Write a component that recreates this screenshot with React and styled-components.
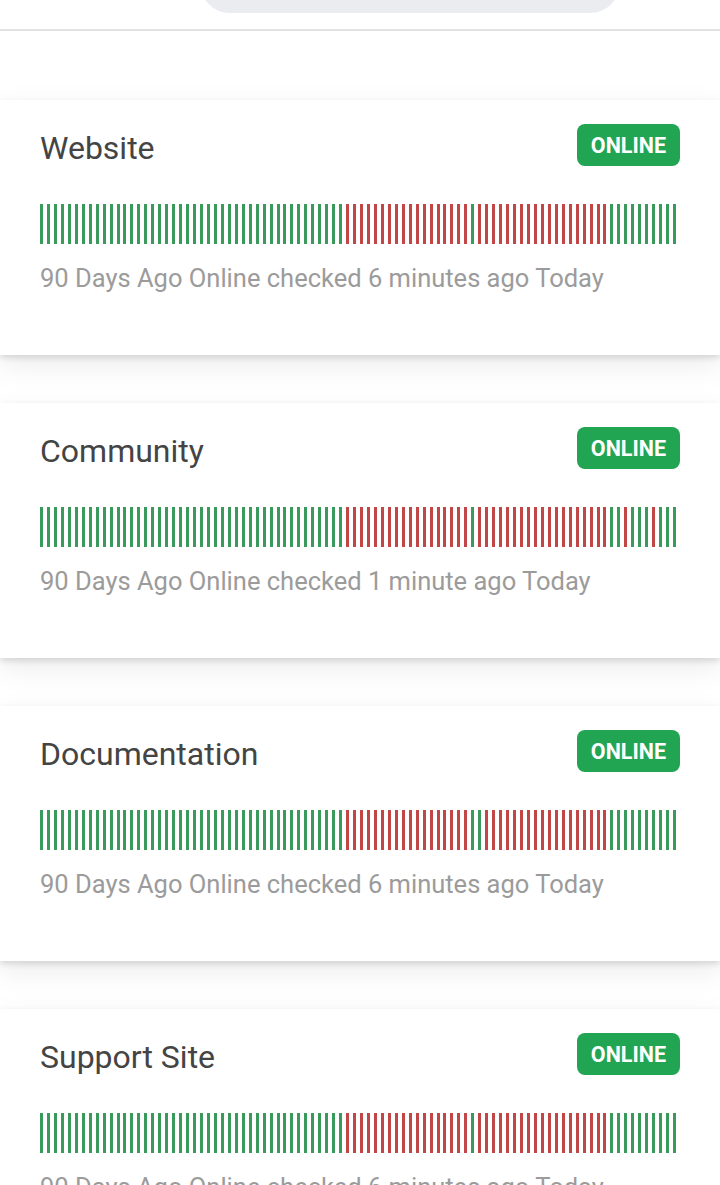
import styled, { createGlobalStyle } from "styled-components";

const GlobalStyle = createGlobalStyle`
  html, body {
    margin: 0;
    padding: 0;
    background: #ffffff;
    font-family: Roboto, "Liberation Sans", Arial, sans-serif;
  }
`;

const Header = styled.header`
  height: 29px;
  display: flex;
  justify-content: center;
  overflow: hidden;
  background: #fff;
  border-bottom: 2px solid #e2e2e2;
`;

const SearchPill = styled.div`
  width: 420px;
  height: 60px;
  margin-top: -47px;
  margin-left: 100px;
  border-radius: 30px;
  background: #ebecf0;
`;

const List = styled.main`
  display: flex;
  flex-direction: column;
  gap: 48px;
  padding: 69px 0 40px;
`;

const Card = styled.section`
  background: #fff;
  padding: 24px 40px 62px;
  box-shadow: 0 3px 6px rgba(0, 0, 0, 0.12), 0 10px 28px rgba(0, 0, 0, 0.08);
`;

const TopRow = styled.div`
  display: flex;
  align-items: center;
  justify-content: space-between;
  height: 42px;
`;

const Name = styled.h2`
  margin: 0;
  padding-top: 6px;
  font-size: 32px;
  line-height: 36px;
  font-weight: 400;
  color: #444;
`;

const Badge = styled.span`
  height: 42px;
  padding: 0 14px;
  display: flex;
  align-items: center;
  border-radius: 8px;
  background: #22a553;
  color: #fff;
  font-size: 21.5px;
  font-weight: 700;
`;

const Bars = styled.div`
  display: grid;
  grid-template-columns: repeat(92, 1fr);
  height: 40px;
  margin-top: 38px;
`;

const Bar = styled.span`
  width: 3px;
  height: 100%;
  background: ${(p) => (p.$down ? "#c34646" : "#3a9a5c")};
`;

const Status = styled.p`
  margin: 19px 0 0;
  font-size: 25.5px;
  line-height: 30px;
  color: #9b9b9b;
`;

// red stretches, by bar index
const makeDays = (greenInRed, extraRed = []) =>
  Array.from({ length: 92 }, (_, i) => {
    if (extraRed.includes(i)) return true;
    if (i >= 44 && i <= 81) return !greenInRed.includes(i);
    return false;
  });

const sites = [
  { name: "Website", checked: "6 minutes ago", days: makeDays([62]) },
  { name: "Community", checked: "1 minute ago", days: makeDays([62], [84, 88]) },
  { name: "Documentation", checked: "6 minutes ago", days: makeDays([62, 63]) },
  { name: "Support Site", checked: "6 minutes ago", days: makeDays([62]) },
];

export default function App() {
  return (
    <>
      <GlobalStyle />
      <Header>
        <SearchPill />
      </Header>
      <List>
        {sites.map((s) => (
          <Card key={s.name}>
            <TopRow>
              <Name>{s.name}</Name>
              <Badge>ONLINE</Badge>
            </TopRow>
            <Bars>
              {s.days.map((down, i) => (
                <Bar key={i} $down={down} />
              ))}
            </Bars>
            <Status>90 Days Ago Online checked {s.checked} Today</Status>
          </Card>
        ))}
      </List>
    </>
  );
}
